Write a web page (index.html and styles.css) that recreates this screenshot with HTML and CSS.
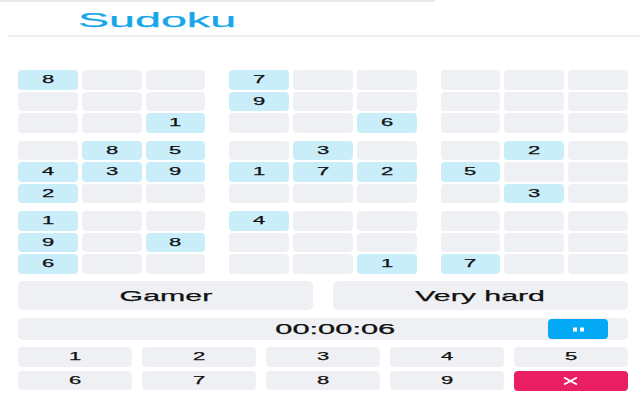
FILE: index.html
```html
<!DOCTYPE html>
<html lang="en">
  <head>
    <meta charset="UTF-8" />
    <meta name="viewport" content="width=device-width, initial-scale=1.0" />
    <title>Sudoku</title>
    <link rel="stylesheet" href="styles.css">
  </head>
  <body>
    <div class="topbar"></div>
    <header class="header">
      <h1 class="title"><span>Sudoku</span></h1>
    </header>

    <main class="game">
      <div class="board">
        <div class="block">
          <div class="cell given"><span>8</span></div><div class="cell"></div><div class="cell"></div>
          <div class="cell"></div><div class="cell"></div><div class="cell"></div>
          <div class="cell"></div><div class="cell"></div><div class="cell given"><span>1</span></div>
        </div>
        <div class="block">
          <div class="cell given"><span>7</span></div><div class="cell"></div><div class="cell"></div>
          <div class="cell given"><span>9</span></div><div class="cell"></div><div class="cell"></div>
          <div class="cell"></div><div class="cell"></div><div class="cell given"><span>6</span></div>
        </div>
        <div class="block">
          <div class="cell"></div><div class="cell"></div><div class="cell"></div>
          <div class="cell"></div><div class="cell"></div><div class="cell"></div>
          <div class="cell"></div><div class="cell"></div><div class="cell"></div>
        </div>

        <div class="block">
          <div class="cell"></div><div class="cell given"><span>8</span></div><div class="cell given"><span>5</span></div>
          <div class="cell given"><span>4</span></div><div class="cell given"><span>3</span></div><div class="cell given"><span>9</span></div>
          <div class="cell given"><span>2</span></div><div class="cell"></div><div class="cell"></div>
        </div>
        <div class="block">
          <div class="cell"></div><div class="cell given"><span>3</span></div><div class="cell"></div>
          <div class="cell given"><span>1</span></div><div class="cell given"><span>7</span></div><div class="cell given"><span>2</span></div>
          <div class="cell"></div><div class="cell"></div><div class="cell"></div>
        </div>
        <div class="block">
          <div class="cell"></div><div class="cell given"><span>2</span></div><div class="cell"></div>
          <div class="cell given"><span>5</span></div><div class="cell"></div><div class="cell"></div>
          <div class="cell"></div><div class="cell given"><span>3</span></div><div class="cell"></div>
        </div>

        <div class="block">
          <div class="cell given"><span>1</span></div><div class="cell"></div><div class="cell"></div>
          <div class="cell given"><span>9</span></div><div class="cell"></div><div class="cell given"><span>8</span></div>
          <div class="cell given"><span>6</span></div><div class="cell"></div><div class="cell"></div>
        </div>
        <div class="block">
          <div class="cell given"><span>4</span></div><div class="cell"></div><div class="cell"></div>
          <div class="cell"></div><div class="cell"></div><div class="cell"></div>
          <div class="cell"></div><div class="cell"></div><div class="cell given"><span>1</span></div>
        </div>
        <div class="block">
          <div class="cell"></div><div class="cell"></div><div class="cell"></div>
          <div class="cell"></div><div class="cell"></div><div class="cell"></div>
          <div class="cell given"><span>7</span></div><div class="cell"></div><div class="cell"></div>
        </div>
      </div>

      <div class="options">
        <button class="option"><span>Gamer</span></button>
        <button class="option"><span>Very hard</span></button>
      </div>

      <div class="timer">
        <div class="time"><span>00:00:06</span></div>
        <button class="pause">
          <svg width="11" height="5" viewBox="0 0 11 5"><rect x="0" y="0.5" width="4" height="4" fill="#fff"/><rect x="7" y="0.5" width="4" height="4" fill="#fff"/></svg>
        </button>
      </div>

      <div class="pad">
        <button class="key"><span>1</span></button>
        <button class="key"><span>2</span></button>
        <button class="key"><span>3</span></button>
        <button class="key"><span>4</span></button>
        <button class="key"><span>5</span></button>
        <button class="key"><span>6</span></button>
        <button class="key"><span>7</span></button>
        <button class="key"><span>8</span></button>
        <button class="key"><span>9</span></button>
        <button class="key erase">
          <svg width="15" height="8" viewBox="0 0 15 8"><path d="M1 0.5 L14 7.5 M14 0.5 L1 7.5" stroke="#fff" stroke-width="1.8" fill="none"/></svg>
        </button>
      </div>
    </main>
  </body>
</html>
```

FILE: styles.css
```css
* {
  box-sizing: border-box;
  margin: 0px;
  padding: 0px;
}
body {
  background: #fff;
  font-family: "Liberation Sans", Arial, sans-serif;
  color: #111;
  width: 640px;
  height: 400px;
  overflow: hidden;
}
button {
  border: none;
  font-family: inherit;
  color: inherit;
  cursor: pointer;
}
span {
  display: inline-block;
  -webkit-text-stroke: 0.25px currentColor;
}
.topbar {
  width: 435px;
  height: 2px;
  background: #e8e9eb;
}
.header {
  height: 35px;
  margin-left: 8px;
  padding: 7.5px 0 0 70px;
  border-bottom: 2px solid #eceef2;
}
.title {
  font-size: 20px;
  line-height: 20px;
  font-weight: normal;
  color: #17a6ea;
}
.title span {
  transform: scaleX(2.33);
  transform-origin: left center;
}
.game {
  padding: 33px 12px 0 18px;
}
.board {
  display: grid;
  grid-template-columns: repeat(3, 1fr);
  column-gap: 24px;
  row-gap: 8px;
}
.block {
  display: grid;
  grid-template-columns: repeat(3, 1fr);
  column-gap: 4px;
  row-gap: 2px;
}
.cell {
  height: 19.5px;
  background: #eff0f4;
  border-radius: 4px;
  text-align: center;
  font-size: 11px;
  line-height: 19.5px;
}
.given {
  background: #c9eef9;
}
.cell span,
.key span {
  transform: scaleX(2);
}
.options {
  display: grid;
  grid-template-columns: 1fr 1fr;
  column-gap: 20px;
  margin-top: 7.5px;
}
.option {
  height: 29px;
  background: #eff0f4;
  border-radius: 5px;
  font-size: 15px;
  line-height: 29px;
}
.option span {
  transform: scaleX(2.02);
}
.timer {
  display: flex;
  align-items: center;
  height: 22px;
  margin-top: 8px;
  padding-right: 20px;
  background: #eff0f4;
  border-radius: 5px;
}
.time {
  flex: 1;
  padding-left: 104px;
  text-align: center;
  font-size: 14px;
  line-height: 22px;
}
.time span {
  transform: scaleX(2.2);
}
.pause {
  width: 60px;
  height: 20px;
  background: #03a9f4;
  border-radius: 4px;
  display: flex;
  align-items: center;
  justify-content: center;
}
.pad {
  display: grid;
  grid-template-columns: repeat(5, 1fr);
  column-gap: 10.5px;
  row-gap: 4px;
  margin-top: 7px;
  width: 609.5px;
}
.key {
  height: 19.5px;
  background: #eff0f4;
  border-radius: 4px;
  font-size: 11px;
  line-height: 19.5px;
}
.erase {
  height: 20px;
  background: #e91e63;
  display: flex;
  align-items: center;
  justify-content: center;
}
```
